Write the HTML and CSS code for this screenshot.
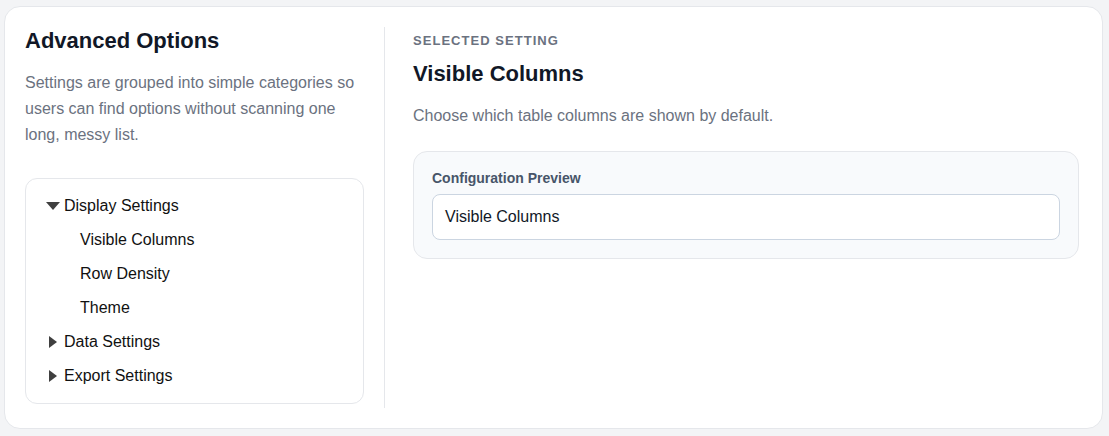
FILE: index.html
```html
<!DOCTYPE html>
<html lang="en">
<head>
<meta charset="utf-8">
<title>Advanced Options</title>
<link rel="stylesheet" href="styles.css">
</head>
<body>
<div class="card">
  <aside class="side">
    <h2 class="title">Advanced Options</h2>
    <p class="desc">Settings are grouped into simple categories so users can find options without scanning one long, messy list.</p>
    <div class="tree">
      <details open>
        <summary>Display Settings</summary>
        <div class="leaf">Visible Columns</div>
        <div class="leaf">Row Density</div>
        <div class="leaf">Theme</div>
      </details>
      <details>
        <summary>Data Settings</summary>
      </details>
      <details>
        <summary>Export Settings</summary>
      </details>
    </div>
  </aside>
  <main class="detail">
    <div class="eyebrow">Selected Setting</div>
    <h2 class="title">Visible Columns</h2>
    <p class="hint">Choose which table columns are shown by default.</p>
    <div class="preview">
      <label class="preview-label">Configuration Preview</label>
      <div class="field">Visible Columns</div>
    </div>
  </main>
</div>
</body>
</html>
```

FILE: styles.css
```css
* { box-sizing: border-box; }
html, body { margin: 0; }
body {
  background: #f3f4f6;
  padding: 6px 6px 0 4px;
  font-family: "Liberation Sans", Arial, sans-serif;
  color: #111827;
}
.card {
  background: #fff;
  border: 1px solid #e5e7eb;
  border-radius: 16px;
  padding: 20px;
  display: grid;
  grid-template-columns: 360px 1fr;
  height: 423px;
}
.side {
  padding-right: 20px;
  border-right: 1px solid #e5e7eb;
}
.title {
  margin: 0;
  font-size: 22px;
  line-height: 28px;
  font-weight: 700;
  color: #111827;
}
.desc {
  margin: 15px 0 0;
  font-size: 16px;
  line-height: 26px;
  color: #6b7280;
}
.tree {
  margin-top: 30px;
  border: 1px solid #e5e7eb;
  border-radius: 12px;
  padding: 10px 20px 10px 20px;
}
.tree summary {
  display: flex;
  align-items: center;
  list-style: none;
  font-size: 16px;
  line-height: 34px;
  color: #111;
  cursor: pointer;
}
.tree summary::-webkit-details-marker { display: none; }
.tree summary::before {
  content: "";
  width: 0;
  height: 0;
  margin-left: 3px;
  margin-right: 7px;
  border-top: 6.5px solid transparent;
  border-bottom: 6.5px solid transparent;
  border-left: 8px solid #3f3f3f;
}
.tree details[open] > summary::before {
  margin-left: 0;
  margin-right: 4px;
  border-left: 7px solid transparent;
  border-right: 7px solid transparent;
  border-top: 8px solid #3f3f3f;
  border-bottom: 0;
}
.leaf {
  font-size: 16px;
  line-height: 34px;
  color: #111;
  padding-left: 34px;
}
.detail {
  padding-left: 28px;
  padding-right: 3px;
}
.eyebrow {
  margin-top: 6px;
  font-size: 13px;
  line-height: 16px;
  font-weight: 700;
  letter-spacing: 0.08em;
  text-transform: uppercase;
  color: #6b7280;
}
.detail .title { margin-top: 11px; }
.hint {
  margin: 16px 0 0;
  font-size: 16px;
  line-height: 24px;
  color: #6b7280;
}
.preview {
  margin-top: 23px;
  background: #f8fafc;
  border: 1px solid #e5e7eb;
  border-radius: 14px;
  padding: 18px;
}
.preview-label {
  display: block;
  font-size: 14px;
  line-height: 16px;
  font-weight: 700;
  color: #475569;
  margin-bottom: 8px;
}
.field {
  height: 46px;
  background: #fff;
  border: 1px solid #cbd5e1;
  border-radius: 8px;
  padding: 0 12px;
  font-size: 16px;
  line-height: 44px;
  color: #111827;
}
```
